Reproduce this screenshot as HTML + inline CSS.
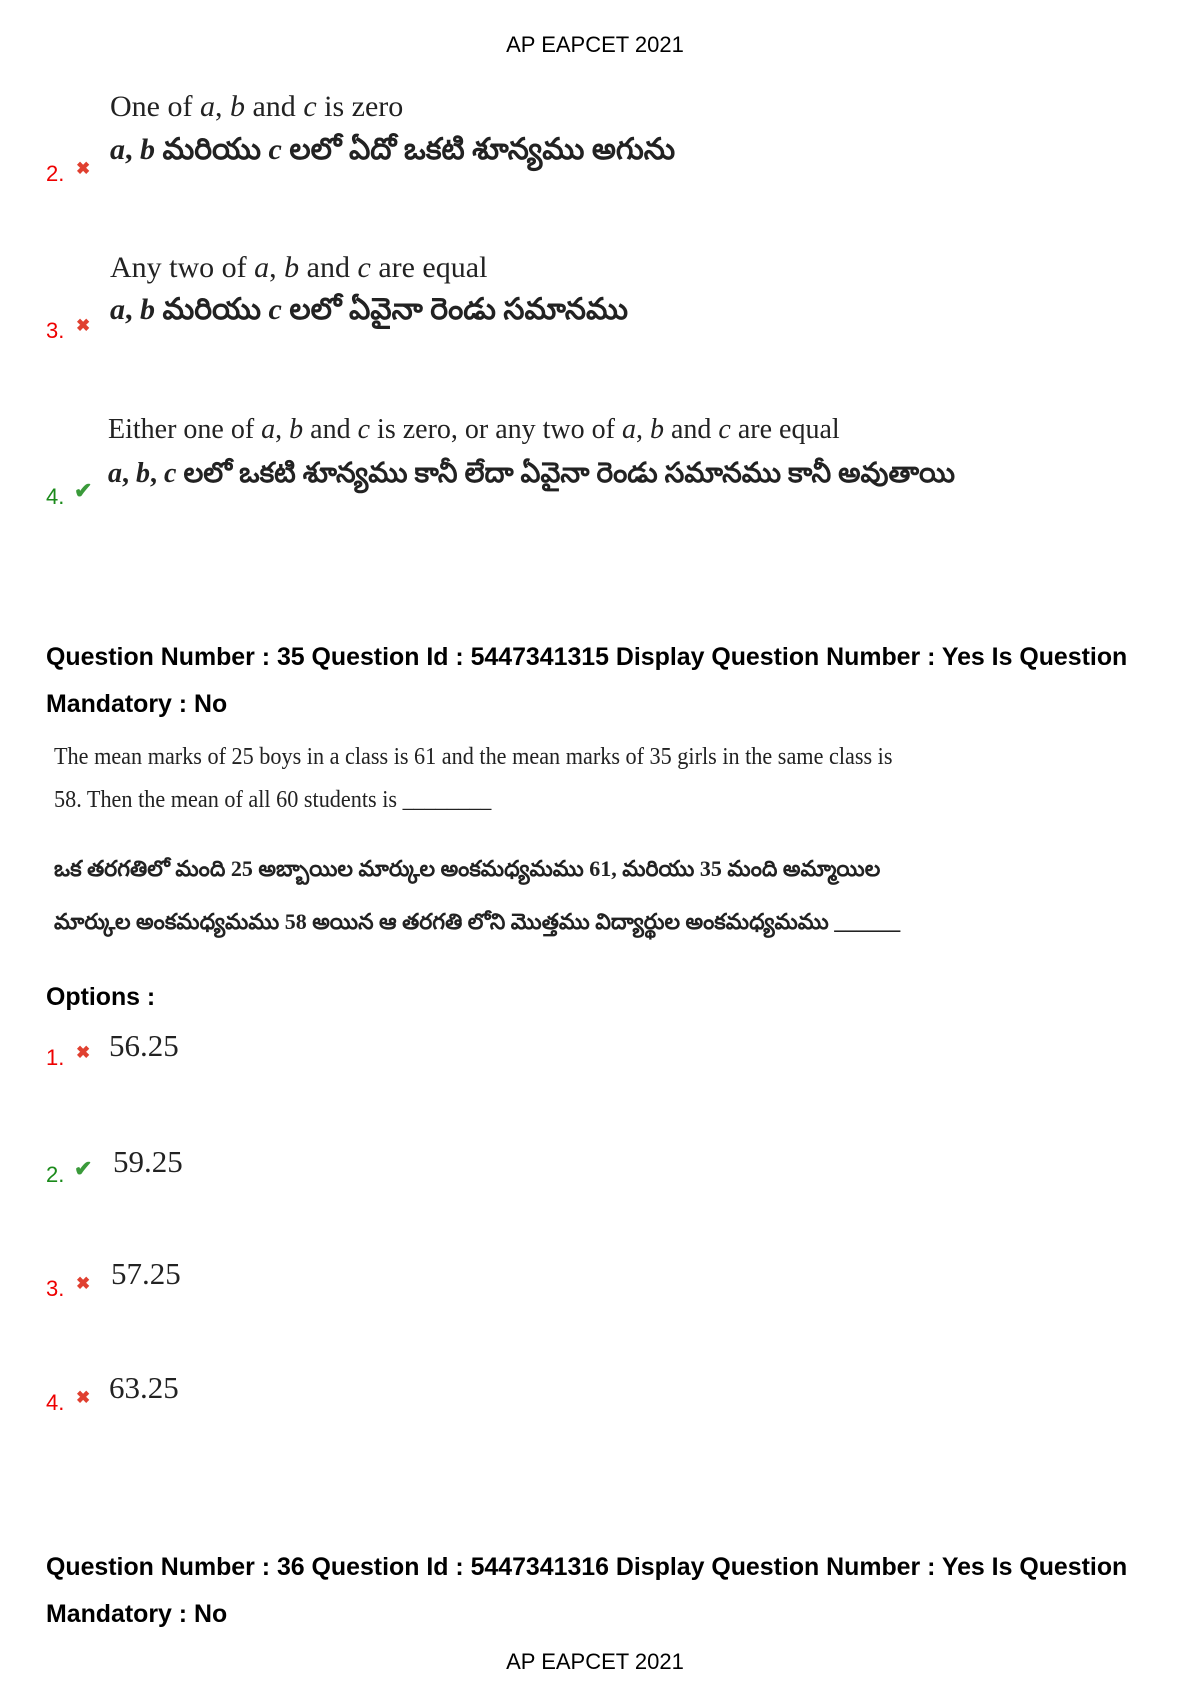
<!DOCTYPE html>
<html><head><meta charset="utf-8"><style>
body{margin:0;width:1190px;height:1684px;background:#fff;position:relative;overflow:hidden;font-family:"Liberation Sans",sans-serif;color:#000}
.a{position:absolute;white-space:nowrap;line-height:1}
.h{font-size:22px;left:0;width:1190px;text-align:center}
.q{font-weight:bold;font-size:24.9px;left:46px;font-family:"Liberation Sans","DejaVu Sans",sans-serif}
.s{font-family:"Liberation Serif",serif;font-size:28px;color:#222}
.t{font-family:"Liberation Serif","Noto Sans CJK SC",serif;font-size:28px;color:#222;font-weight:bold}
.p{font-family:"Liberation Serif",serif;font-size:24px;color:#222;transform-origin:0 0;transform:scaleX(.925)}
.v{font-family:"Liberation Serif",serif;font-size:31px;color:#222}
.n{font-size:22px;left:46px}
.r{color:#e00}.g{color:#1a8a1a}
.x{color:#e04030;font-size:17px;font-weight:bold}
.c{color:#3a9a3a;font-size:22px;font-weight:bold}
</style></head><body>
<div class="a h" style="top:34px">AP EAPCET 2021</div>

<div class="a s" style="left:110px;top:92px;font-size:30px">One of <i>a</i>, <i>b</i> and <i>c</i> is zero</div>
<div class="a t" style="left:110px;top:135px;font-size:30px"><i>a</i>, <i>b</i> మరియు <i>c</i> లలో ఏదో ఒకటి శూన్యము అగును</div>
<div class="a n r" style="top:163px">2.</div><div class="a x" style="left:76px;top:160px">✖</div>

<div class="a s" style="left:110px;top:253px;font-size:30px">Any two of <i>a</i>, <i>b</i> and <i>c</i> are equal</div>
<div class="a t" style="left:110px;top:295px;font-size:30px"><i>a</i>, <i>b</i> మరియు <i>c</i> లలో ఏవైనా రెండు సమానము</div>
<div class="a n r" style="top:320px">3.</div><div class="a x" style="left:76px;top:317px">✖</div>

<div class="a s" style="left:108px;top:416px">Either one of <i>a</i>, <i>b</i> and <i>c</i> is zero, or any two of <i>a</i>, <i>b</i> and <i>c</i> are equal</div>
<div class="a t" style="left:108px;top:460px;font-size:28px"><i>a</i>, <i>b</i>, <i>c</i> లలో ఒకటి శూన్యము కానీ లేదా ఏవైనా రెండు సమానము కానీ అవుతాయి</div>
<div class="a n g" style="top:486px">4.</div><div class="a c" style="left:74px;top:480px">✔</div>

<div class="a q" style="top:645px">Question Number : 35 Question Id : 5447341315 Display Question Number : Yes Is Question</div>
<div class="a q" style="top:692px">Mandatory : No</div>

<div class="a p" style="left:54px;top:745px">The mean marks of 25 boys in a class is 61 and the mean marks of 35 girls in the same class is</div>
<div class="a p" style="left:54px;top:788px">58. Then the mean of all 60 students is ________</div>
<div class="a t" style="left:54px;top:858px;font-size:22px">ఒక తరగతిలో మంది 25 అబ్బాయిల మార్కుల అంకమధ్యమము 61, మరియు 35 మంది అమ్మాయిల</div>
<div class="a t" style="left:54px;top:911px;font-size:22px">మార్కుల అంకమధ్యమము 58 అయిన ఆ తరగతి లోని మొత్తము విద్యార్థుల అంకమధ్యమము ______</div>

<div class="a q" style="top:985px">Options :</div>

<div class="a v" style="left:109px;top:1030px">56.25</div>
<div class="a n r" style="top:1047px">1.</div><div class="a x" style="left:76px;top:1044px">✖</div>
<div class="a v" style="left:113px;top:1146px">59.25</div>
<div class="a n g" style="top:1164px">2.</div><div class="a c" style="left:74px;top:1158px">✔</div>
<div class="a v" style="left:111px;top:1258px">57.25</div>
<div class="a n r" style="top:1278px">3.</div><div class="a x" style="left:76px;top:1275px">✖</div>
<div class="a v" style="left:109px;top:1372px">63.25</div>
<div class="a n r" style="top:1392px">4.</div><div class="a x" style="left:76px;top:1389px">✖</div>

<div class="a q" style="top:1555px">Question Number : 36 Question Id : 5447341316 Display Question Number : Yes Is Question</div>
<div class="a q" style="top:1602px">Mandatory : No</div>
<div class="a h" style="top:1651px">AP EAPCET 2021</div>
</body></html>
